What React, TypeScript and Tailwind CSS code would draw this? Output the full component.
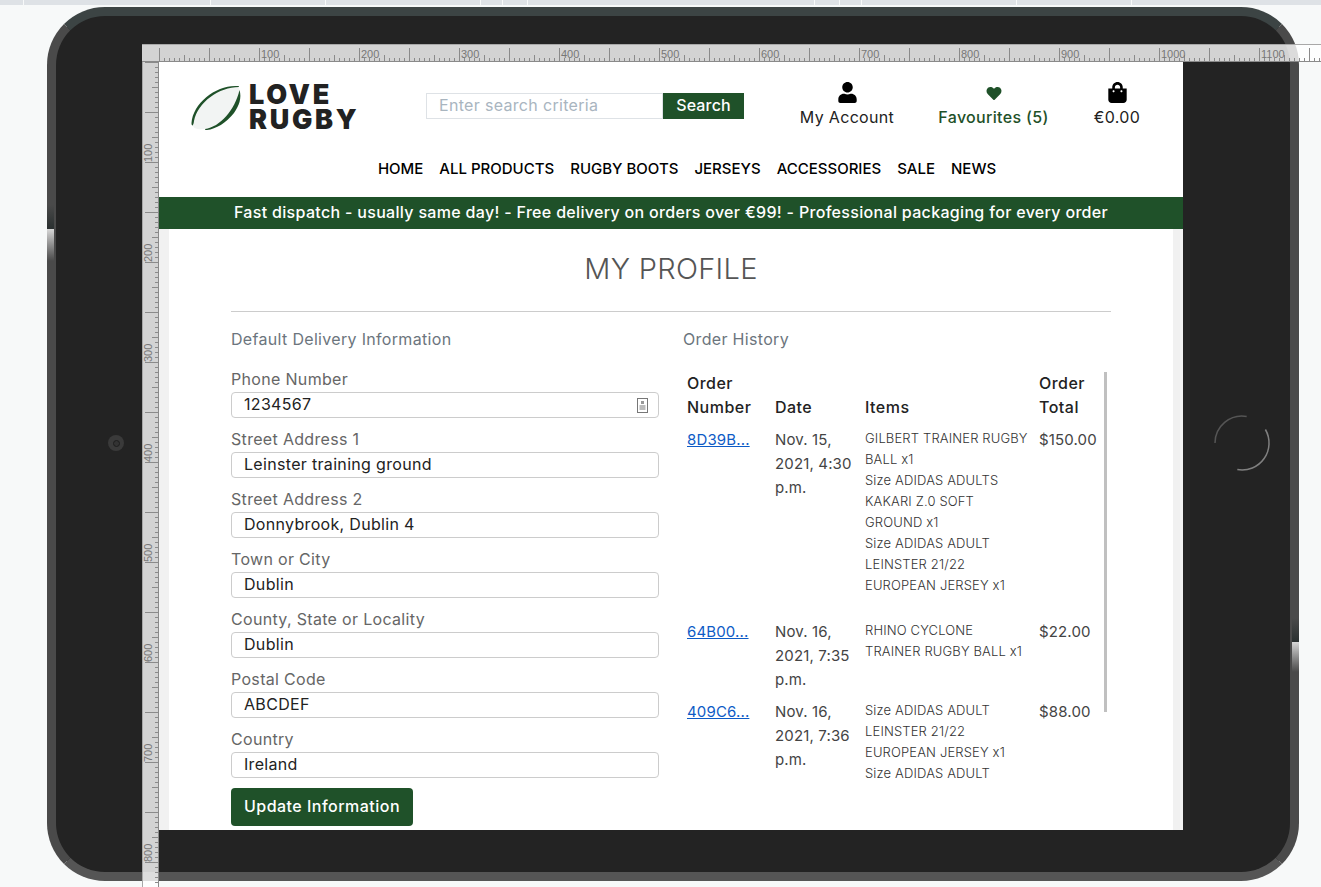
import { FaHeart, FaShoppingBag, FaUser } from "react-icons/fa"

const navLinks = ["HOME", "ALL PRODUCTS", "RUGBY BOOTS", "JERSEYS", "ACCESSORIES", "SALE", "NEWS"]

const fields = [
  { label: "Phone Number", value: "1234567", icon: true },
  { label: "Street Address 1", value: "Leinster training ground" },
  { label: "Street Address 2", value: "Donnybrook, Dublin 4" },
  { label: "Town or City", value: "Dublin" },
  { label: "County, State or Locality", value: "Dublin" },
  { label: "Postal Code", value: "ABCDEF" },
  { label: "Country", value: "Ireland" },
]

const orders = [
  {
    id: "8D39B...",
    date: ["Nov. 15,", "2021, 4:30", "p.m."],
    items: [
      "GILBERT TRAINER RUGBY",
      "BALL x1",
      "Size ADIDAS ADULTS",
      "KAKARI Z.0 SOFT",
      "GROUND x1",
      "Size ADIDAS ADULT",
      "LEINSTER 21/22",
      "EUROPEAN JERSEY x1",
    ],
    total: "$150.00",
    gap: true,
  },
  {
    id: "64B00...",
    date: ["Nov. 16,", "2021, 7:35", "p.m."],
    items: ["RHINO CYCLONE", "TRAINER RUGBY BALL x1"],
    total: "$22.00",
  },
  {
    id: "409C6...",
    date: ["Nov. 16,", "2021, 7:36", "p.m."],
    items: ["Size ADIDAS ADULT", "LEINSTER 21/22", "EUROPEAN JERSEY x1", "Size ADIDAS ADULT"],
    total: "$88.00",
  },
]

const stripTicks = [23, 210, 325, 480, 502, 527, 814, 839, 861, 1016, 1131]

function tickLength(i: number) {
  if (i % 50 === 0) return 13
  if (i % 25 === 0) return 6
  return 3
}

function TopRuler() {
  const ticks = Array.from({ length: 235 }, (_, n) => n * 5)
  return (
    <svg className="absolute left-[142px] top-[44px] bg-white/80" width="1179" height="18">
      <line x1="0" y1="0.5" x2="1179" y2="0.5" stroke="#a8a8a8" />
      <line x1="0" y1="17.5" x2="1179" y2="17.5" stroke="#8a8a8a" />
      {ticks.map((i) => (
        <line key={i} x1={17.5 + i} y1={17} x2={17.5 + i} y2={17 - tickLength(i)} stroke="#8a8a8a" />
      ))}
      {ticks
        .filter((i) => i > 0 && i % 100 === 0)
        .map((i) => (
          <text key={i} x={19 + i} y={14} fontSize="11" fill="#777" fontFamily="Liberation Sans, sans-serif">
            {i}
          </text>
        ))}
    </svg>
  )
}

function LeftRuler() {
  const ticks = Array.from({ length: 165 }, (_, n) => n * 5)
  return (
    <svg className="absolute left-[142px] top-[62px] bg-white/80" width="17" height="825">
      <line x1="0.5" y1="0" x2="0.5" y2="825" stroke="#a8a8a8" />
      <line x1="16.5" y1="0" x2="16.5" y2="825" stroke="#8a8a8a" />
      {ticks.map((i) => (
        <line key={i} x1={16} y1={0.5 + i} x2={16 - tickLength(i)} y2={0.5 + i} stroke="#8a8a8a" />
      ))}
      {ticks
        .filter((i) => i > 0 && i % 100 === 0)
        .map((i) => (
          <text
            key={i}
            x={0}
            y={0}
            transform={`translate(10 ${i}) rotate(-90)`}
            fontSize="11"
            fill="#777"
            fontFamily="Liberation Sans, sans-serif"
          >
            {i}
          </text>
        ))}
    </svg>
  )
}

function RugbyBall() {
  return (
    <svg width="52" height="48" viewBox="0 0 52 48" className="shrink-0">
      <path d="M3 36C6 18 26 3 44 2C50 2 51 8 49 15C45 30 28 44 12 45C5 46 1 43 3 36Z" fill="#f2f4f3" />
      <path d="M1.500 39C3 19 26 1 47 2C48.500 2 49.500 2.500 49 3C29 3 8 18 4 37C3.500 42 1.500 43 1.500 39Z" fill="#1f5129" />
      <path d="M15 45C30 43 45 26 49.500 6C52 14 49 22 44 29C36 39 26 45 17 46C15.500 46 14.500 45.500 15 45Z" fill="#1f5129" />
    </svg>
  )
}

function PhoneFieldIcon() {
  return (
    <svg width="11" height="15" viewBox="0 0 11 15" className="shrink-0">
      <rect x="0.5" y="0.5" width="10" height="14" fill="none" stroke="#777" />
      <rect x="4" y="3" width="3" height="3" fill="#999" />
      <rect x="2.500" y="7" width="6" height="5" fill="#bbb" />
    </svg>
  )
}

export default function App() {
  return (
    <div className="relative h-[887px] w-[1321px] overflow-hidden bg-[#f7f9f9] font-[Inter,sans-serif]">
      <svg className="block" width="1321" height="5">
        <rect width="1321" height="5" fill="#dee2e6" />
        {stripTicks.map((x) => (
          <rect key={x} x={x} width="1" height="5" fill="#f7f9f9" />
        ))}
      </svg>

      {/* tablet frame */}
      <div className="ml-[47px] mt-[2px] h-[874px] w-[1252px] rounded-[58px] border-[9px] border-[#4a4a4a] border-t-[#3c4444] border-b-[#555555] bg-[#232323] pl-[103px] pt-[46px]">
        <div className="flex h-[768px] w-[1024px] flex-col overflow-hidden bg-white">
          <header className="h-[135px] shrink-0">
            <div className="flex h-[95px] items-start">
              <div className="ml-[31px] mt-[22px] flex w-[236px] items-start">
                <RugbyBall />
                <div className="ml-[7px] -mt-[2px] text-[27px] font-black leading-[25px] tracking-[0.1em] text-[#222]">
                  <div>LOVE</div>
                  <div>RUGBY</div>
                </div>
              </div>
              <form className="mt-[31px] flex h-[26px] w-[318px]">
                <div className="flex w-[237px] items-center border border-[#dee2e6] pb-[2px] pl-[12px] text-[16px] tracking-[0.02em] text-[#a9b5bf]">
                  Enter search criteria
                </div>
                <button type="button" className="w-[81px] bg-[#1f5129] pb-[2px] text-[16px] font-medium tracking-[0.01em] text-white">
                  Search
                </button>
              </form>
              <div className="ml-[56px] mt-[20px] flex w-[94px] flex-col items-center whitespace-nowrap text-[16px] leading-[24px] text-[#222]">
                <FaUser className="h-[21px] w-[19px] text-black" />
                <span className="mt-[2px] tracking-[0.02em]">My Account</span>
              </div>
              <div className="ml-[44px] mt-[20px] flex w-[111px] flex-col items-center whitespace-nowrap text-[16px] font-medium leading-[24px] text-[#1f5129]">
                <div className="flex h-[21px] items-center pt-[2px]">
                  <FaHeart className="h-[15px] w-[16px]" />
                </div>
                <span className="mt-[2px] tracking-[0.02em]">Favourites (5)</span>
              </div>
              <div className="ml-[45px] mt-[20px] flex w-[46px] flex-col items-center whitespace-nowrap text-[16px] leading-[24px] text-[#222]">
                <FaShoppingBag className="h-[21px] w-[19px] text-black" />
                <span className="mt-[2px] tracking-[0.02em]">€0.00</span>
              </div>
            </div>
            <nav className="flex justify-center gap-[16px] pl-[32px] text-[15px] font-medium leading-[24px] text-black">
              {navLinks.map((link) => (
                <a key={link} className="whitespace-nowrap">
                  {link}
                </a>
              ))}
            </nav>
          </header>

          <div className="flex h-[32px] shrink-0 items-center justify-center bg-[#1f5129] pb-[2px] text-[16px] font-medium tracking-[0.02em] text-white">
            Fast dispatch - usually same day! - Free delivery on orders over €99! - Professional packaging for every order
          </div>

          <div className="flex-1 bg-[#f1f1f1] px-[10px]">
            <main className="h-full bg-white px-[62px] pt-[16px]">
              <h1 className="text-center text-[29px] font-light leading-[48px] tracking-[0.01em] text-[#555]">MY PROFILE</h1>
              <hr className="mt-[18px] border-[#ccc]" />
              <div className="mt-[15px] flex gap-[24px]">
                <section className="w-[428px]">
                  <h2 className="mb-[16px] text-[16px] leading-[24px] tracking-[0.02em] text-[#6c757d]">
                    Default Delivery Information
                  </h2>
                  {fields.map((field) => (
                    <div key={field.label} className="mb-[9px]">
                      <label className="mb-[1px] block text-[16px] leading-[24px] tracking-[0.02em] text-[#666]">
                        {field.label}
                      </label>
                      <div className="flex h-[26px] items-center justify-between rounded-[4px] border border-[#ccc] pl-[12px] pr-[10px] text-[16px] tracking-[0.02em] text-[#222]">
                        <span className="pb-[2px]">{field.value}</span>
                        {field.icon && <PhoneFieldIcon />}
                      </div>
                    </div>
                  ))}
                  <button
                    type="button"
                    className="mt-[1px] h-[38px] w-[182px] rounded-[4px] bg-[#1f5129] pb-[2px] text-[16px] font-medium tracking-[0.03em] text-white"
                  >
                    Update Information
                  </button>
                </section>

                <section className="w-[428px]">
                  <h2 className="mb-[16px] text-[16px] leading-[24px] tracking-[0.02em] text-[#6c757d]">Order History</h2>
                  <div className="relative h-[418px] overflow-hidden">
                    <table className="w-[418px] table-fixed text-left text-[15px] leading-[24px] tracking-[0.01em] text-[#444]">
                      <colgroup>
                        <col className="w-[88px]" />
                        <col className="w-[90px]" />
                        <col className="w-[174px]" />
                        <col className="w-[66px]" />
                      </colgroup>
                      <thead>
                        <tr className="align-bottom text-[16px] tracking-[0.03em] text-[#222]">
                          <th className="p-1 font-medium">Order Number</th>
                          <th className="p-1 font-medium">Date</th>
                          <th className="p-1 font-medium">Items</th>
                          <th className="p-1 font-medium">Order Total</th>
                        </tr>
                      </thead>
                      <tbody>
                        {orders.map((order) => (
                          <tr key={order.id} className="align-top">
                            <td className="px-1 pb-[3px] pt-[5px]">
                              <a className="text-[#0d5bc6] underline">{order.id}</a>
                            </td>
                            <td className="whitespace-nowrap px-1 pb-[3px] pt-[5px]">
                              {order.date.map((line) => (
                                <div key={line}>{line}</div>
                              ))}
                            </td>
                            <td className="whitespace-nowrap px-1 pb-[3px] pt-[5px] text-[13px] font-light leading-[21px] text-[#333]">
                              {order.items.map((line, i) => (
                                <div key={i}>{line}</div>
                              ))}
                              {order.gap && <div className="h-[16px]" />}
                            </td>
                            <td className="px-1 pb-[3px] pt-[5px]">{order.total}</td>
                          </tr>
                        ))}
                      </tbody>
                    </table>
                    {/* scrollbar thumb */}
                    <div className="absolute left-[421px] top-[5px] h-[340px] w-[3px] bg-[#c0c0c0]" />
                  </div>
                </section>
              </div>
            </main>
          </div>
        </div>
      </div>

      {/* tablet details and rulers sit on top of the frame */}
      <div className="absolute left-[108px] top-[435px] flex h-[16px] w-[16px] items-center justify-center rounded-full bg-[#3a3a3a]">
        <div className="h-[7px] w-[7px] rounded-full border border-[#1d1d1d] bg-[#333]" />
      </div>
      <svg className="absolute left-[1212px] top-[413px]" width="60" height="60" fill="none">
        <path d="M53.400 16.500A27 27 0 0 1 25.300 56.600" stroke="#808080" strokeWidth="1.500" />
        <path d="M3 30A27 27 0 0 1 34.700 3.400" stroke="#555" strokeWidth="1.500" />
      </svg>
      <div className="absolute left-[47px] top-[205px] h-[24px] w-[7px] bg-gradient-to-b from-[#4a4a4a] to-[#2a3030]" />
      <div className="absolute left-[47px] top-[229px] h-[32px] w-[7px] bg-gradient-to-b from-[#d8d8d8] to-[#4a4a4a]" />
      <div className="absolute left-[1292px] top-[618px] h-[24px] w-[7px] bg-gradient-to-b from-[#4a4a4a] to-[#2a3030]" />
      <div className="absolute left-[1292px] top-[642px] h-[30px] w-[7px] bg-gradient-to-b from-[#d8d8d8] to-[#4a4a4a]" />
      <TopRuler />
      <LeftRuler />
    </div>
  )
}
